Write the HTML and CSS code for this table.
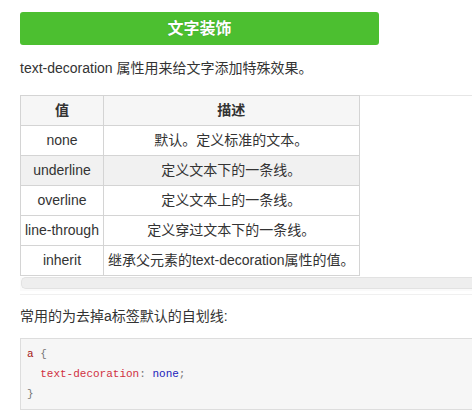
FILE: index.html
```html
<!DOCTYPE html>
<html lang="zh">
<head>
<meta charset="utf-8">
<title>文字装饰</title>
<link rel="stylesheet" href="styles.css">
</head>
<body>
<div class="page">
  <h2 class="title">文字装饰</h2>
  <p class="text">text-decoration 属性用来给文字添加特殊效果。</p>
  <div class="table-wrap">
    <table class="ref">
      <tr><th>值</th><th>描述</th></tr>
      <tr><td>none</td><td>默认。定义标准的文本。</td></tr>
      <tr class="alt"><td>underline</td><td>定义文本下的一条线。</td></tr>
      <tr><td>overline</td><td>定义文本上的一条线。</td></tr>
      <tr><td>line-through</td><td>定义穿过文本下的一条线。</td></tr>
      <tr><td>inherit</td><td>继承父元素的text-decoration属性的值。</td></tr>
    </table>
    <div class="scrollbar"><div class="thumb"></div></div>
  </div>
  <p class="text second">常用的为去掉a标签默认的自划线:</p>
  <pre class="code"><span class="sel">a</span> <span class="pun">{</span>
  <span class="prop">text-decoration</span><span class="pun">:</span> <span class="val">none</span><span class="pun">;</span>
<span class="pun">}</span></pre>
</div>
</body>
</html>
```

FILE: styles.css
```css
html, body {
  margin: 0;
  padding: 0;
  overflow: hidden;
  background: #fff;
}
.page {
  padding: 12px 0 0 20px;
  font-family: "Liberation Sans", "Noto Sans CJK SC", sans-serif;
  font-size: 14px;
  color: #333;
}
.title {
  margin: 0;
  width: 359px;
  height: 33px;
  line-height: 33px;
  background: #4cbf30;
  border-radius: 3px;
  color: #fff;
  text-align: center;
  font-size: 16px;
  font-weight: bold;
  text-shadow: 0 0 1px rgba(0,0,0,0.25);
}
.text {
  margin: 13px 0 0 0;
  line-height: 20px;
}
.table-wrap {
  margin-top: 17px;
  border-top: 1px solid #e6e6e6;
  border-bottom: 1px solid #f0f0f0;
  padding-bottom: 3px;
}
.ref {
  border-collapse: collapse;
  margin-top: -1px;
}
.ref th, .ref td {
  border: 1px solid #d4d4d4;
  padding: 5px 4px;
  line-height: 19px;
  text-align: center;
  white-space: nowrap;
  color: #333;
}
.ref th {
  background: #f6f6f6;
  font-weight: bold;
}
.ref tr.alt td {
  background: #f1f1f1;
}
.scrollbar {
  height: 14px;
  background: #fafafa;
  padding-left: 1px;
}
.thumb {
  height: 12px;
  margin-top: 1px;
  background: #eeeeee;
  border: 1px solid #e2e2e2;
  border-right: none;
  border-radius: 5px 0 0 5px;
  box-sizing: border-box;
}
.second {
  margin-top: 11px;
}
.code {
  margin: 12px 0 0 0;
  padding: 5px 6px;
  background: #f6f6f6;
  border: 1px solid #dddddd;
  border-right: none;
  font-family: "Liberation Mono", monospace;
  font-size: 11px;
  line-height: 20px;
  color: #666;
}
.sel { color: #a31515; }
.prop { color: #d0303f; }
.val { color: #2222bb; }
.pun { color: #777; }
```
